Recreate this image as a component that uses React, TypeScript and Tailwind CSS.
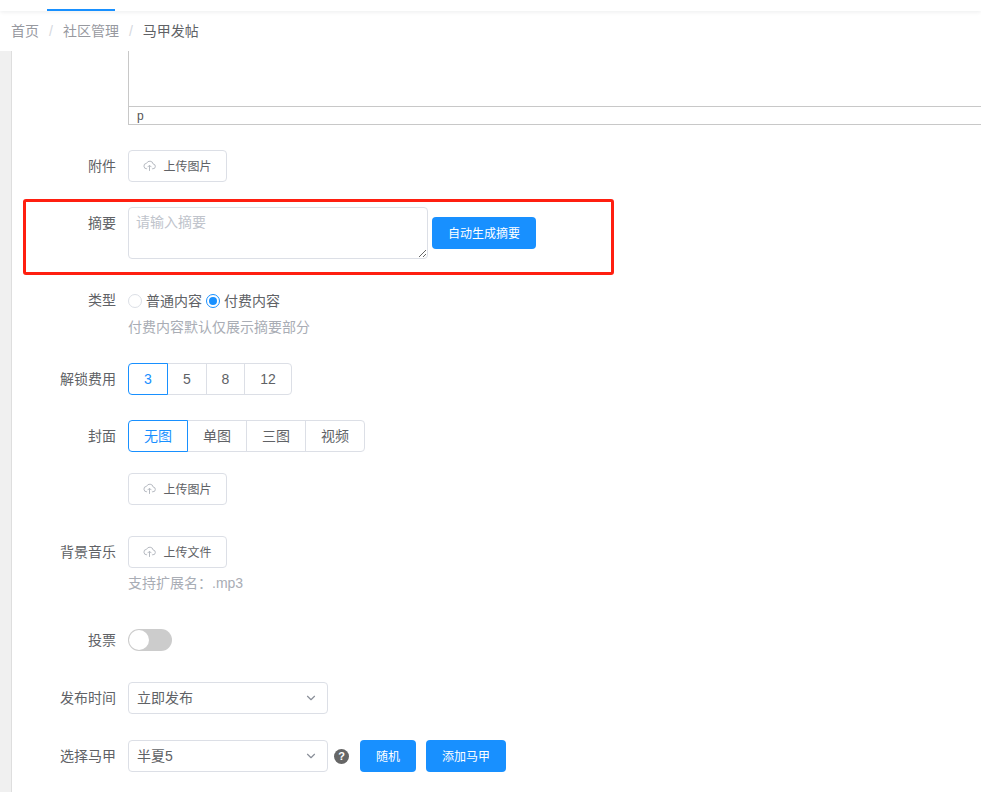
import React from 'react';
import { ChevronDown } from 'lucide-react';

const FONT = 'font-["Liberation_Sans","Noto_Sans_CJK_SC",sans-serif]';

const Label: React.FC<{ text?: string }> = ({ text }) => (
  <label className="w-[105px] shrink-0 text-right text-sm leading-8 text-[#606266]">{text}</label>
);

const UploadIcon = () => (
  <svg viewBox="0 0 24 24" fill="none" stroke="currentColor" strokeWidth="1.8" className="-mt-[2px] h-[13px] w-[13px] text-[#b4b8bf]">
    <path d="M7.5 18H7a5 5 0 0 1-.5-10 6.5 6.5 0 0 1 12.4 1.4A4.3 4.3 0 0 1 18 18h-1.5" />
    <path d="M12 22v-10M8.5 15 12 11.5l3.5 3.5" />
  </svg>
);

const UploadButton: React.FC<{ text: string }> = ({ text }) => (
  <button className="flex h-8 w-[99px] items-center justify-center gap-[7px] rounded border border-[#dcdfe6] bg-white pt-px text-xs text-[#606266]">
    <UploadIcon />
    {text}
  </button>
);

const Segmented: React.FC<{ items: { text: string; width: string }[] }> = ({ items }) => (
  <div className="flex h-8">
    {items.map((item, i) => (
      <div
        key={item.text}
        className={`flex items-center justify-center border text-sm ${item.width} ${
          i === 0
            ? 'relative z-10 rounded-l border-[#1890ff] text-[#1890ff]'
            : `-ml-px border-[#dcdfe6] text-[#606266] ${i === items.length - 1 ? 'rounded-r' : ''}`
        }`}
      >
        {item.text}
      </div>
    ))}
  </div>
);

const SelectBox: React.FC<{ value: string }> = ({ value }) => (
  <div className="flex h-8 w-[200px] items-center justify-between rounded border border-[#dcdfe6] bg-white pl-2 pr-[9px] text-sm text-[#606266]">
    <span>{value}</span>
    <ChevronDown className="h-[14px] w-[14px] text-[#8a8f99]" />
  </div>
);

const PrimaryButton: React.FC<{ text: string; width: string }> = ({ text, width }) => (
  <button className={`h-8 rounded bg-[#1890ff] pt-px text-xs text-white ${width}`}>{text}</button>
);

export default function App() {
  return (
    <div className={`flex h-[792px] w-[981px] flex-col overflow-hidden bg-white ${FONT}`}>
      {/* top nav + breadcrumb */}
      <div className="z-10 h-[11px] shrink-0 bg-white pl-[47px] pt-[9px] shadow-[0_1px_4px_rgba(0,21,41,0.08)]">
        <div className="h-[2px] w-[68px] bg-[#1890ff]" />
      </div>
      <div className="flex h-10 shrink-0 items-center pl-[11px] text-sm text-[#97999f]">
        <span>首页</span>
        <span className="mx-[10px] text-[#d5d8de]">/</span>
        <span>社区管理</span>
        <span className="mx-[10px] text-[#d5d8de]">/</span>
        <span className="text-[#606266]">马甲发帖</span>
      </div>

      <div className="flex min-h-0 flex-1">
        <div className="w-[12px] shrink-0 border-r border-[#dedede] bg-[#f0f0f0]" />
        <div className="min-w-0 flex-1 overflow-hidden">
          {/* editor tail */}
          <div className="ml-[116px] flex h-[74px] w-[900px] flex-col border-x border-b border-[#c8c8c8]">
            <div className="flex-1" />
            <div className="h-[18px] border-t border-[#c8c8c8] pl-2 font-['Liberation_Sans',sans-serif] text-xs leading-[18px] text-[#555]">
              p
            </div>
          </div>

          <div className="mt-[25px] flex -ml-px gap-3">
            <Label text="附件" />
            <UploadButton text="上传图片" />
          </div>

          {/* summary */}
          <div className="relative mt-[25px] flex -ml-px gap-3">
            <div className="pointer-events-none absolute -top-2 left-3 h-[76px] w-[591px] rounded-[3px] border-[3px] border-[#ff1f10]" />
            <Label text="摘要" />
            <textarea
              className="h-[52px] w-[300px] rounded border border-[#dcdfe6] py-1 pl-[7px] pr-2 text-sm placeholder:text-[#c0c4cc]"
              placeholder="请输入摘要"
            />
            <div className="-ml-2 pt-[10px]">
              <PrimaryButton text="自动生成摘要" width="w-[104px]" />
            </div>
          </div>

          {/* type */}
          <div className="mt-[30px] flex -ml-px gap-3">
            <label className="w-[105px] shrink-0 text-right text-sm leading-[22px] text-[#606266]">类型</label>
            <div className="mt-px flex items-center text-sm leading-[22px] text-[#606266]">
              <span className="h-[14px] w-[14px] rounded-full border border-[#dcdfe6]" />
              <span className="ml-1">普通内容</span>
              <span className="ml-1 flex h-[14px] w-[14px] items-center justify-center rounded-full border border-[#1890ff]">
                <span className="h-2 w-2 rounded-full bg-[#1890ff]" />
              </span>
              <span className="ml-1">付费内容</span>
            </div>
          </div>
          <p className="ml-[116px] mt-[5px] text-sm leading-5 text-[#a9adb5]">付费内容默认仅展示摘要部分</p>

          <div className="mt-[26px] flex -ml-px gap-3">
            <Label text="解锁费用" />
            <Segmented
              items={[
                { text: '3', width: 'w-10' },
                { text: '5', width: 'w-[40px]' },
                { text: '8', width: 'w-[39px]' },
                { text: '12', width: 'w-[48px]' },
              ]}
            />
          </div>

          <div className="mt-[25px] flex -ml-px gap-3">
            <Label text="封面" />
            <Segmented
              items={[
                { text: '无图', width: 'w-[60px]' },
                { text: '单图', width: 'w-[60px]' },
                { text: '三图', width: 'w-[60px]' },
                { text: '视频', width: 'w-[60px]' },
              ]}
            />
          </div>

          <div className="mt-[21px] flex -ml-px gap-3">
            <Label />
            <UploadButton text="上传图片" />
          </div>

          <div className="mt-[31px] flex -ml-px gap-3">
            <Label text="背景音乐" />
            <UploadButton text="上传文件" />
          </div>
          <p className="ml-[116px] mt-[5px] text-sm leading-5 text-[#a9adb5]">支持扩展名：.mp3</p>

          <div className="mt-[36px] flex -ml-px items-center gap-3">
            <label className="w-[105px] shrink-0 text-right text-sm text-[#606266]">投票</label>
            <div className="flex h-[22px] w-11 items-center rounded-full bg-[#ccc] pl-px">
              <span className="h-5 w-5 rounded-full bg-white" />
            </div>
          </div>

          <div className="mt-[31px] flex -ml-px gap-3">
            <Label text="发布时间" />
            <SelectBox value="立即发布" />
          </div>

          <div className="mt-[26px] flex -ml-px items-center gap-3">
            <Label text="选择马甲" />
            <SelectBox value="半夏5" />
            <span className="-ml-[6px] flex h-[15px] w-[15px] items-center justify-center rounded-full bg-[#666] text-[11px] font-bold text-white">
              ?
            </span>
            <div className="-ml-px flex gap-[10px]">
              <PrimaryButton text="随机" width="w-14" />
              <PrimaryButton text="添加马甲" width="w-20" />
            </div>
          </div>
        </div>
      </div>
    </div>
  );
}
